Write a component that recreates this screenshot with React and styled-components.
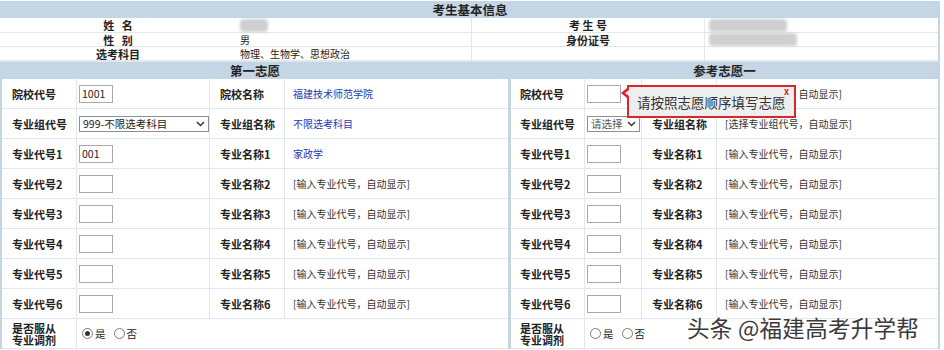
import styled, { createGlobalStyle, css } from 'styled-components';

const GlobalStyle = createGlobalStyle`
  html, body {
    margin: 0;
    padding: 0;
    background: #ffffff;
    font-family: "Noto Sans CJK SC", "Noto Sans", sans-serif;
    color: #222;
  }
`;

const BLUE_BAND = '#c4d5e3';
const LINE = '#e2e7eb';

const Page = styled.div`
  position: relative;
  width: 944px;
  height: 350px;
  overflow: hidden;
`;

const Sheet = styled.div`
  width: 940px;
`;

const TitleBar = styled.div`
  height: 17px;
  margin-top: 1px;
  background: ${BLUE_BAND};
  text-align: center;
  font-size: 12.5px;
  font-weight: 700;
  line-height: 17px;
`;

const InfoGrid = styled.div`
  display: grid;
  grid-template-columns: 236px 236px 233px 1fr;
  grid-template-rows: 15px 14px 14px;
  border-right: 2px solid ${BLUE_BAND};
  border-bottom: 1px solid ${LINE};
`;

const InfoCell = styled.div`
  display: flex;
  align-items: center;
  font-size: 10px;
  line-height: 14px;
  border-bottom: 1px solid ${LINE};
  padding-left: 4px;
  ${(p) =>
    p.$label &&
    css`
      justify-content: center;
      padding-left: 0;
      font-size: 11px;
      font-weight: 700;
    `}
  ${(p) =>
    p.$divider &&
    css`
      border-right: 1px solid ${LINE};
    `}
`;

const Redacted = styled.div`
  width: ${(p) => p.$w}px;
  height: 13px;
  background: #cfcfcf;
  border-radius: 4px;
  filter: blur(1.5px);
`;

const Panels = styled.div`
  display: grid;
  grid-template-columns: 508px 1fr;
`;

const Panel = styled.div`
  border-left: ${(p) => (p.$first ? '2px' : '3px')} solid ${BLUE_BAND};
  ${(p) =>
    !p.$first &&
    css`
      border-right: 2px solid ${BLUE_BAND};
    `}
`;

const PanelHeader = styled.div`
  height: 17px;
  background: ${BLUE_BAND};
  text-align: center;
  font-size: 12.5px;
  font-weight: 700;
  line-height: 17px;
`;

const FormGrid = styled.div`
  display: grid;
  grid-template-columns: ${(p) => p.$cols};
  grid-auto-rows: 30px;
`;

const Cell = styled.div`
  position: relative;
  display: flex;
  align-items: center;
  border-bottom: 1px solid ${LINE};
  border-right: ${(p) => (p.$last ? 'none' : `1px solid ${LINE}`)};
  padding-left: ${(p) => p.$pad ?? 8}px;
  font-size: 10px;
  color: #333;
  ${(p) =>
    p.$span &&
    css`
      grid-column: span ${p.$span};
    `}
`;

const Label = styled(Cell)`
  font-size: 11px;
  font-weight: 700;
  color: #222;
  line-height: 12px;
`;

const LinkText = styled.span`
  color: #2b35ad;
`;

const Box = styled.div`
  width: 30px;
  height: 16px;
  border: 1px solid #a9a9a9;
  background: #fff;
  font-size: 10.5px;
  line-height: 16px;
  padding-left: 2px;
  color: #222;
  box-sizing: content-box;
`;

const SelectBox = styled.div`
  display: flex;
  align-items: center;
  justify-content: space-between;
  width: ${(p) => p.$w}px;
  height: 16px;
  border: 1px solid #8f8f8f;
  background: #fff;
  padding: 0 3px;
  box-sizing: border-box;
  font-size: 10.5px;
  color: ${(p) => (p.$muted ? '#555' : '#222')};
  svg {
    flex: none;
  }
`;

const RadioGroup = styled.div`
  display: flex;
  align-items: center;
  gap: 8px;
  font-size: 10.5px;
  color: #222;
`;

const RadioItem = styled.label`
  display: flex;
  align-items: center;
  gap: 2px;
`;

const RadioDot = styled.span`
  width: 9px;
  height: 9px;
  border-radius: 50%;
  border: 1px solid #7a7a7a;
  background: #fff;
  display: flex;
  align-items: center;
  justify-content: center;
  &::after {
    content: '';
    width: 5px;
    height: 5px;
    border-radius: 50%;
    background: ${(p) => (p.$on ? '#333' : 'transparent')};
  }
`;

const Tooltip = styled.div`
  position: absolute;
  left: 42px;
  top: 6px;
  width: 157px;
  height: 29px;
  border: 2px solid #d8262d;
  background: #eeeeee;
  z-index: 2;
  display: flex;
  align-items: center;
  padding-left: 8px;
  box-sizing: content-box;
  font-size: 13.5px;
  color: #333;
  white-space: nowrap;

  &::before {
    content: '';
    position: absolute;
    left: -8px;
    top: 1px;
    border-style: solid;
    border-width: 5px 6px 5px 0;
    border-color: transparent #d8262d transparent transparent;
  }
  &::after {
    content: '';
    position: absolute;
    left: -4px;
    top: 3px;
    border-style: solid;
    border-width: 3px 4px 3px 0;
    border-color: transparent #eeeeee transparent transparent;
  }
`;

const CloseMark = styled.span`
  position: absolute;
  right: 5px;
  top: 0px;
  font-size: 9px;
  font-weight: 700;
  color: #d8262d;
  line-height: 9px;
`;

const Watermark = styled.div`
  position: absolute;
  left: 687px;
  top: 311px;
  font-size: 22.5px;
  color: #3a3a3a;
  letter-spacing: 0.3px;
  text-shadow: 0 0 2px #fff, 0 0 2px #fff, 1px 1px 0 #fff, -1px -1px 0 #fff;
  white-space: nowrap;
`;

function Chevron() {
  return (
    <svg width="9" height="6" viewBox="0 0 9 6">
      <path d="M1 1l3.5 3.5L8 1" fill="none" stroke="#333" strokeWidth="1.5" />
    </svg>
  );
}

function Radios({ yes }) {
  return (
    <RadioGroup>
      <RadioItem>
        <RadioDot $on={yes} />是
      </RadioItem>
      <RadioItem>
        <RadioDot />否
      </RadioItem>
    </RadioGroup>
  );
}

const HINT = '[输入专业代号，自动显示]';

function WishPanel({ first }) {
  const pad = first
    ? { label: 10, input: 2, name: 10, value: 8 }
    : { label: 9, input: 2, name: 10, value: 8 };
  const cols = first ? '75px 133px 75px 1fr' : '74px 57px 75px 1fr';

  const majors = [1, 2, 3, 4, 5, 6];

  return (
    <Panel $first={first}>
      <PanelHeader>{first ? '第一志愿' : '参考志愿一'}</PanelHeader>
      <FormGrid $cols={cols}>
        <Label $pad={pad.label}>院校代号</Label>
        <Cell $pad={pad.input}>
          <Box>{first ? '1001' : ''}</Box>
          {!first && (
            <Tooltip>
              请按照志愿顺序填写志愿
              <CloseMark>x</CloseMark>
            </Tooltip>
          )}
        </Cell>
        <Label $pad={pad.name}>院校名称</Label>
        <Cell $pad={pad.value} $last>
          {first ? <LinkText>福建技术师范学院</LinkText> : '[输入院校代号，自动显示]'}
        </Cell>

        <Label $pad={pad.label}>专业组代号</Label>
        <Cell $pad={pad.input}>
          {first ? (
            <SelectBox $w={130}>
              999-不限选考科目
              <Chevron />
            </SelectBox>
          ) : (
            <SelectBox $w={53} $muted>
              请选择
              <Chevron />
            </SelectBox>
          )}
        </Cell>
        <Label $pad={pad.name}>专业组名称</Label>
        <Cell $pad={pad.value} $last>
          {first ? <LinkText>不限选考科目</LinkText> : '[选择专业组代号，自动显示]'}
        </Cell>

        {majors.map((n) => (
          <FormRow key={n} n={n} first={first} pad={pad} />
        ))}

        <Label $pad={pad.label}>
          是否服从
          <br />
          专业调剂
        </Label>
        <Cell $pad={5} $span={3} $last>
          <Radios yes={first} />
        </Cell>
      </FormGrid>
    </Panel>
  );
}

function FormRow({ n, first, pad }) {
  const filled = first && n === 1;
  return (
    <>
      <Label $pad={pad.label}>专业代号{n}</Label>
      <Cell $pad={pad.input}>
        <Box>{filled ? '001' : ''}</Box>
      </Cell>
      <Label $pad={pad.name}>专业名称{n}</Label>
      <Cell $pad={pad.value} $last>
        {filled ? <LinkText>家政学</LinkText> : HINT}
      </Cell>
    </>
  );
}

export default function App() {
  return (
    <Page>
      <GlobalStyle />
      <Sheet>
        <TitleBar>考生基本信息</TitleBar>
        <InfoGrid>
          <InfoCell $label>姓&nbsp;&nbsp;&nbsp;名</InfoCell>
          <InfoCell $divider>
            <Redacted $w={28} />
          </InfoCell>
          <InfoCell $label $divider>考&nbsp;生&nbsp;号</InfoCell>
          <InfoCell>
            <Redacted $w={78} />
          </InfoCell>

          <InfoCell $label>性&nbsp;&nbsp;&nbsp;别</InfoCell>
          <InfoCell $divider>男</InfoCell>
          <InfoCell $label $divider>身份证号</InfoCell>
          <InfoCell>
            <Redacted $w={88} />
          </InfoCell>

          <InfoCell $label>选考科目</InfoCell>
          <InfoCell $divider>物理、生物学、思想政治</InfoCell>
          <InfoCell $divider />
          <InfoCell />
        </InfoGrid>
        <Panels>
          <WishPanel first />
          <WishPanel />
        </Panels>
      </Sheet>
      <Watermark>头条 @福建高考升学帮</Watermark>
    </Page>
  );
}
